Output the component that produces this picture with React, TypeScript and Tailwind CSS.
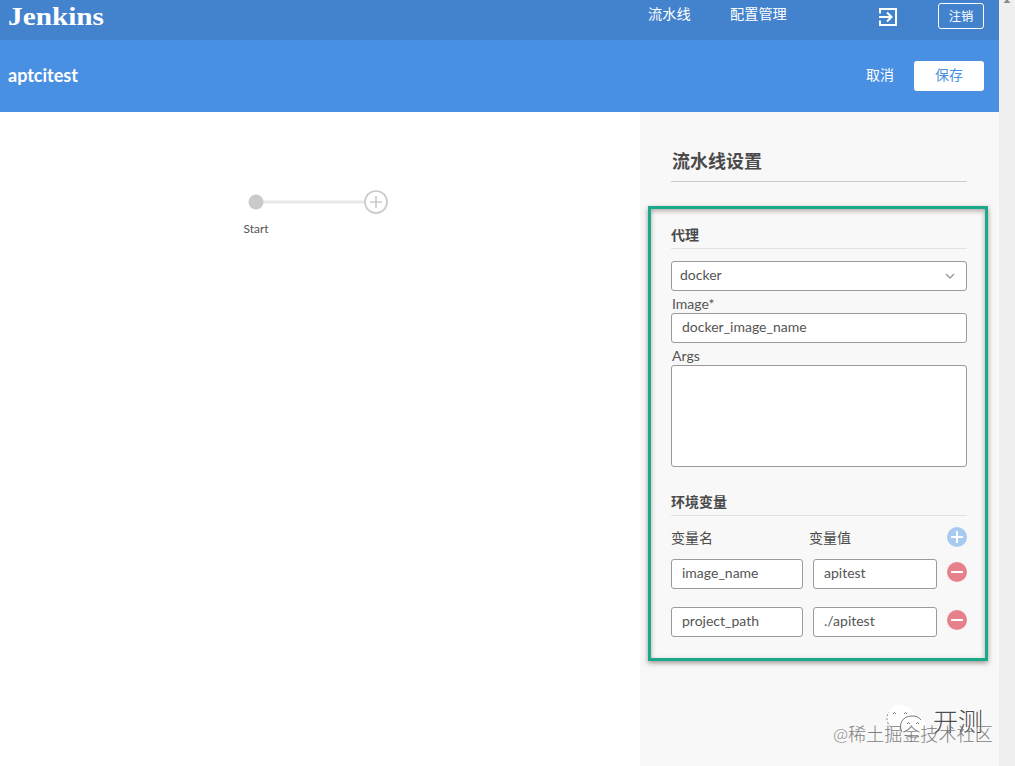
const variables = [
  { name: "image_name", value: "apitest" },
  { name: "project_path", value: "./apitest" },
];

const field = "block h-[30px] rounded-[3px] border border-[#9b9a9a] bg-white px-2.5 text-[14px] text-[#555555] leading-[24px] pb-1";

const TopBar = () => {
  return (
    <header className="flex h-10 items-start bg-[#4382cd] text-white">
      <div className="ml-2 h-8 w-[98px]">
        <svg width="98" height="32" className="block">
          <text x="0" y="24.5" textLength="96" lengthAdjust="spacingAndGlyphs" className="fill-white font-['Liberation_Serif'] text-[26px] font-bold">Jenkins</text>
        </svg>
      </div>
      <nav className="ml-auto flex text-[14.2px] leading-5">
        <a className="mt-1 w-[82px]">流水线</a>
        <a className="mt-1 w-[148px]">配置管理</a>
      </nav>
      <svg width="20" height="20" viewBox="0 0 20 20" fill="none" stroke="white" strokeWidth="2" className="mt-[7px]">
        <path d="M2 6.5V2h16v16H2v-4.5M1 10h12M9 5.5l4.5 4.5L9 14.5" />
      </svg>
      <button className="mt-[3px] mr-[15px] ml-10 h-[26px] w-[46px] rounded-[3px] border border-white text-[12.3px] leading-[23px]">注销</button>
    </header>
  )
}

const ActionBar = () => {
  return (
    <div className="flex h-[72px] items-center bg-[#4a90e2] pr-[15px] pl-2 text-white">
      <h1 className="pb-0.5 text-[18px] font-bold">aptcitest</h1>
      <button className="ml-auto pb-1 text-[14px]">取消</button>
      <button className="ml-5 h-[30px] w-[70px] rounded-[3px] bg-white pb-1 text-[14px] text-[#4a90e2]">保存</button>
    </div>
  )
}

const Graph = () => {
  return (
    <main className="w-[640px] bg-white pt-[76px] pl-[236px]">
      <svg width="160" height="28" viewBox="0 0 160 28" fill="none" className="block">
        <path d="M20 14h108" stroke="#e8e8e8" strokeWidth="3" />
        <circle cx="20" cy="14" r="7.5" fill="#cacaca" />
        <circle cx="140" cy="14" r="11" stroke="#cacaca" strokeWidth="1.7" />
        <path d="M134 14h12M140 8v12" stroke="#cacaca" strokeWidth="1.6" />
      </svg>
      <div className="mt-1 w-10 text-center text-[12px] leading-[18px] text-[#555555]">Start</div>
    </main>
  )
}

const RoundIcon = ({ add = false }: { add?: boolean }) => {
  return (
    <svg width="20" height="20" viewBox="0 0 20 20" className={add ? "ml-auto text-[#a8c9f1]" : "mt-[3px] ml-2.5 text-[#e6818c]"}>
      <circle cx="10" cy="10" r="10" fill="currentColor" />
      <path d={add ? "M4 10h12M10 4v12" : "M4 10h12"} stroke="white" strokeWidth="2" />
    </svg>
  )
}

const Settings = () => {
  return (
    <aside className="w-[359px] bg-[#f8f8f8] text-[#4a4a4a]">
      <h2 className="mr-8 ml-[31px] h-[70px] border-b border-[#cbcdcb] pt-9 pl-px text-[18px] leading-[26px] font-bold">流水线设置</h2>
      <div className="mt-6 mr-[11px] ml-2 h-[455px] border-3 border-[#1aaa8b] pr-[18px] pl-5 shadow-[0_2px_5px_rgba(70,50,40,0.5),inset_0_2px_5px_rgba(70,50,40,0.4)]">
        <h3 className="h-10 border-b border-[#e2e4e3] pt-4 text-[14px] leading-5 font-bold">代理</h3>
        <div className="mt-3 flex h-[30px] items-center justify-between rounded-[3px] border border-[#9b9a9a] bg-white pr-[11px] pl-2 text-[14px] text-[#555555]">
          <span className="pb-1">docker</span>
          <svg width="10" height="8" viewBox="0 0 10 8" fill="none" stroke="#9a9a9a" strokeWidth="1.4">
            <path d="M1 2l4 4 4-4" />
          </svg>
        </div>
        <label className="block h-[22px] pt-[3px] pl-px text-[14px] leading-5 text-[#555555]">Image*</label>
        <input className={field + " w-full"} defaultValue="docker_image_name" />
        <label className="block h-[22px] pt-[3px] pl-px text-[14px] leading-5 text-[#555555]">Args</label>
        <textarea className="block h-[102px] w-full resize-none rounded-[3px] border border-[#9b9a9a] bg-white" />

        <h3 className="mt-6 h-[25px] border-b border-[#e2e4e3] text-[14px] leading-[22px] font-bold">环境变量</h3>
        <div className="flex h-[43px] items-start pt-[11px] text-[14px] leading-[22px]">
          <span className="w-[138px]">变量名</span>
          <span>变量值</span>
          <RoundIcon add />
        </div>
        {variables.map((item) => (
          <div key={item.name} className="mb-[18px] flex items-start">
            <input className={field + " w-[132px]"} defaultValue={item.name} />
            <input className={field + " ml-2.5 w-[124px]"} defaultValue={item.value} />
            <RoundIcon />
          </div>
        ))}
      </div>
    </aside>
  )
}

const Watermark = () => {
  return (
    <div className="absolute top-[700px] left-[832px] h-[50px] w-[166px]">
      <svg width="44" height="38" viewBox="0 0 44 38" fill="none" stroke="#555" strokeWidth="0.8" className="absolute top-1 left-[53px]">
        <ellipse cx="16" cy="13" rx="14" ry="12" fill="white" stroke="none" />
        <path d="M6 23C1 19 1 12 4 8" strokeWidth="0.7" strokeDasharray="2 2" />
        <ellipse cx="28" cy="22" rx="12.5" ry="10.5" fill="white" stroke="none" />
        <path d="M17 28c-4-7 0-16 10-16 4 0 7 1 9 4M20 31c4 2.5 9 2.5 14 1.5" />
        <path d="M8 10q1.5-3 3 0M19 10q1.5-3 3 0M22 20q1.5-3 3 0M31 20q1.5-3 3 0" />
      </svg>
      <span className="absolute top-[3px] left-[101px] text-[25px] leading-9 font-light whitespace-nowrap text-[#4b4b4b] [text-shadow:-1px_-1px_0_white]">开测</span>
      <span className="absolute top-[22px] left-px text-[18.1px] leading-6 font-light whitespace-nowrap text-[#7d7d7d]">@稀土掘金技术社区</span>
    </div>
  )
}

const App = () => {
  return (
    <div className="relative flex h-[766px] w-[1015px] overflow-hidden bg-white font-['Lato','Noto_Sans_CJK_SC',sans-serif]">
      <div className="flex w-[999px] flex-col">
        <TopBar />
        <ActionBar />
        <div className="flex flex-1">
          <Graph />
          <Settings />
        </div>
      </div>
      <div className="w-4 bg-[#f0f0f0]">
        <svg width="16" height="6" className="block">
          <path d="M4.5 3L8 -1l3.5 4z" fill="#8b8b8b" />
        </svg>
      </div>
      <Watermark />
    </div>
  )
}

export default App
